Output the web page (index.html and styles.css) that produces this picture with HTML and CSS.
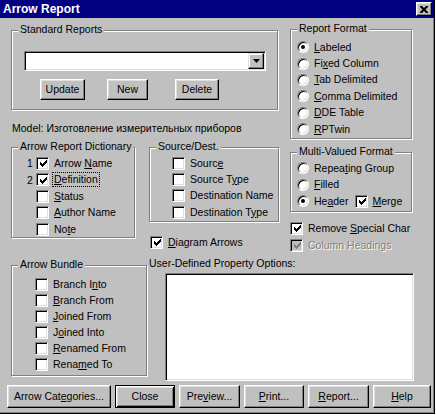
FILE: index.html
```html
<!DOCTYPE html>
<html>
<head>
<meta charset="utf-8">
<title>Arrow Report</title>
<link rel="stylesheet" href="styles.css">
</head>
<body>
<div class="window">
  <div class="titlebar">
    <span class="title">Arrow Report</span>
    <span class="close"><svg width="8" height="7" viewBox="0 0 8 7"><path d="M0 0h2l2 2 2-2h2v1l-2.5 2.5 2.5 2.5v1h-2l-2-2-2 2h-2v-1l2.5-2.5-2.5-2.5z"/></svg></span>
  </div>
  <div class="client">
    <div class="upper">
      <div class="leftcol">
        <div class="group std">
          <div class="legend">Standard Reports</div>
          <div class="combo">
            <div class="combo-btn"><svg width="7" height="4" viewBox="0 0 7 4"><path d="M0 0h7l-3.5 4z"/></svg></div>
          </div>
          <div class="btnrow">
            <button class="btn b-update">Update</button>
            <button class="btn b-new">New</button>
            <button class="btn b-delete">Delete</button>
          </div>
        </div>
        <div class="model">Model: Изготовление измерительных приборов</div>
        <div class="dictrow">
          <div class="group dict">
            <div class="legend">Arrow Report Dictionary</div>
            <div class="list dict-list">
              <div class="row"><span class="num">1</span><span class="cb on"><svg width="7" height="7" viewBox="0 0 7 7"><path d="M0 2h1v3h-1zM1 3h1v3h-1zM2 4h1v3h-1zM3 3h1v3h-1zM4 2h1v3h-1zM5 1h1v3h-1zM6 0h1v3h-1z"/></svg></span><span class="lbl">Arrow <u>N</u>ame</span></div>
              <div class="row"><span class="num">2</span><span class="cb on"><svg width="7" height="7" viewBox="0 0 7 7"><path d="M0 2h1v3h-1zM1 3h1v3h-1zM2 4h1v3h-1zM3 3h1v3h-1zM4 2h1v3h-1zM5 1h1v3h-1zM6 0h1v3h-1z"/></svg></span><span class="lbl focus"><u>D</u>efinition</span></div>
              <div class="row"><span class="num"></span><span class="cb"></span><span class="lbl"><u>S</u>tatus</span></div>
              <div class="row"><span class="num"></span><span class="cb"></span><span class="lbl"><u>A</u>uthor Name</span></div>
              <div class="row"><span class="num"></span><span class="cb"></span><span class="lbl">No<u>t</u>e</span></div>
            </div>
          </div>
          <div class="srccol">
            <div class="group src">
              <div class="legend">Source/Dest.</div>
              <div class="list src-list">
                <div class="row"><span class="cb"></span><span class="lbl">Sourc<u>e</u></span></div>
                <div class="row"><span class="cb"></span><span class="lbl">Source T<u>y</u>pe</span></div>
                <div class="row"><span class="cb"></span><span class="lbl">Destination Name</span></div>
                <div class="row"><span class="cb"></span><span class="lbl">Destination T<u>y</u>pe</span></div>
              </div>
            </div>
            <div class="row diagram"><span class="cb on"><svg width="7" height="7" viewBox="0 0 7 7"><path d="M0 2h1v3h-1zM1 3h1v3h-1zM2 4h1v3h-1zM3 3h1v3h-1zM4 2h1v3h-1zM5 1h1v3h-1zM6 0h1v3h-1z"/></svg></span><span class="lbl"><u>D</u>iagram Arrows</span></div>
          </div>
        </div>
      </div>
      <div class="rightcol">
        <div class="group fmt">
          <div class="legend">Report Format</div>
          <div class="list fmt-list">
            <div class="row"><span class="radio on"></span><span class="lbl"><u>L</u>abeled</span></div>
            <div class="row"><span class="radio"></span><span class="lbl">Fi<u>x</u>ed Column</span></div>
            <div class="row"><span class="radio"></span><span class="lbl"><u>T</u>ab Delimited</span></div>
            <div class="row"><span class="radio"></span><span class="lbl"><u>C</u>omma Delimited</span></div>
            <div class="row"><span class="radio"></span><span class="lbl"><u>D</u>DE Table</span></div>
            <div class="row"><span class="radio"></span><span class="lbl"><u>R</u>PTwin</span></div>
          </div>
        </div>
        <div class="group multi">
          <div class="legend">Multi-Valued Format</div>
          <div class="list multi-list">
            <div class="row"><span class="radio"></span><span class="lbl">Repea<u>t</u>ing Group</span></div>
            <div class="row"><span class="radio"></span><span class="lbl"><u>F</u>illed</span></div>
            <div class="row"><span class="radio on"></span><span class="lbl">He<u>a</u>der</span><span class="cb on merge"><svg width="7" height="7" viewBox="0 0 7 7"><path d="M0 2h1v3h-1zM1 3h1v3h-1zM2 4h1v3h-1zM3 3h1v3h-1zM4 2h1v3h-1zM5 1h1v3h-1zM6 0h1v3h-1z"/></svg></span><span class="lbl"><u>M</u>erge</span></div>
          </div>
        </div>
        <div class="row remove"><span class="cb on"><svg width="7" height="7" viewBox="0 0 7 7"><path d="M0 2h1v3h-1zM1 3h1v3h-1zM2 4h1v3h-1zM3 3h1v3h-1zM4 2h1v3h-1zM5 1h1v3h-1zM6 0h1v3h-1z"/></svg></span><span class="lbl wide">Remove <u>S</u>pecial Char</span></div>
        <div class="row colhead disabled"><span class="cb on"><svg width="7" height="7" viewBox="0 0 7 7"><path d="M0 2h1v3h-1zM1 3h1v3h-1zM2 4h1v3h-1zM3 3h1v3h-1zM4 2h1v3h-1zM5 1h1v3h-1zM6 0h1v3h-1z"/></svg></span><span class="lbl wide">Column Headings</span></div>
      </div>
    </div>
    <div class="lower">
      <div class="group bundle">
        <div class="legend">Arrow Bundle</div>
        <div class="list bundle-list">
          <div class="row"><span class="cb"></span><span class="lbl">Branch I<u>n</u>to</span></div>
          <div class="row"><span class="cb"></span><span class="lbl"><u>B</u>ranch From</span></div>
          <div class="row"><span class="cb"></span><span class="lbl"><u>J</u>oined From</span></div>
          <div class="row"><span class="cb"></span><span class="lbl">J<u>o</u>ined Into</span></div>
          <div class="row"><span class="cb"></span><span class="lbl"><u>R</u>enamed From</span></div>
          <div class="row"><span class="cb"></span><span class="lbl">Rena<u>m</u>ed To</span></div>
        </div>
      </div>
      <div class="udcol">
        <div class="udlabel">User-Defined Property Options:</div>
        <div class="listbox"></div>
      </div>
    </div>
    <div class="buttons">
      <button class="btn w-cat">Arrow Cat<u>e</u>gories...</button>
      <button class="btn default w-close">Close</button>
      <button class="btn w-prev">Pre<u>v</u>iew...</button>
      <button class="btn w-print"><u>P</u>rint...</button>
      <button class="btn w-report"><u>R</u>eport...</button>
      <button class="btn w-help"><u>H</u>elp</button>
    </div>
  </div>
</div>
</body>
</html>
```

FILE: styles.css
```css
html, body {
  margin: 0;
  padding: 0;
  background: #ffffff;
}
body {
  font-family: "Liberation Sans", Arial, sans-serif;
  font-size: 10.5px;
  color: #000;
}
u { text-decoration: underline; text-underline-offset: 1px; }

.window {
  width: 434px;
  height: 413px;
  background: #c0c0c0;
  border-right: 1px solid #000;
  border-bottom: 1px solid #000;
  box-shadow: inset -1px -1px 0 #808080;
  display: flex;
  flex-direction: column;
}

.titlebar {
  height: 18px;
  background: #000080;
  display: flex;
  align-items: center;
  padding: 0 2px 0 3px;
  flex: none;
}
.title {
  color: #fff;
  font-weight: bold;
  font-size: 12px;
  line-height: 18px;
}
.close {
  margin-left: auto;
  width: 16px;
  height: 14px;
  box-sizing: border-box;
  background: #c0c0c0;
  border: 1px solid;
  border-color: #fff #000 #000 #fff;
  box-shadow: inset -1px -1px 0 #808080, inset 1px 1px 0 #dfdfdf;
  display: flex;
  align-items: center;
  justify-content: center;
}

.client {
  display: flex;
  flex-direction: column;
}

.upper {
  height: 237px;
  display: flex;
}
.leftcol {
  margin: 12px 0 0 11px;
  width: 268px;
  display: flex;
  flex-direction: column;
}
.rightcol {
  margin: 11px 0 0 11px;
  width: 122px;
  display: flex;
  flex-direction: column;
}

.group {
  box-sizing: border-box;
  border: 1px solid #808080;
  box-shadow: inset 1px 1px 0 #fff, 1px 1px 0 #fff;
  flex: none;
}
.legend {
  width: max-content;
  height: 13px;
  line-height: 13px;
  background: #c0c0c0;
  padding: 0 2px;
  margin: -8px 0 -5px 6px;
  position: relative;
}

.std { width: 267px; height: 80px; }
.combo {
  margin: 20px 0 0 12px;
  width: 242px;
  height: 20px;
  box-sizing: border-box;
  background: #fff;
  border: 1px solid;
  border-color: #808080 #fff #fff #808080;
  box-shadow: inset 1px 1px 0 #000, inset -1px -1px 0 #dfdfdf;
  display: flex;
  justify-content: flex-end;
  padding: 1px;
}
.combo-btn {
  width: 16px;
  height: 16px;
  box-sizing: border-box;
  background: #c0c0c0;
  border: 1px solid;
  border-color: #dfdfdf #000 #000 #dfdfdf;
  box-shadow: inset -1px -1px 0 #808080, inset 1px 1px 0 #fff;
  display: flex;
  align-items: center;
  justify-content: center;
}

.btnrow {
  display: flex;
  margin-top: 8px;
}
.btn {
  font-family: inherit;
  font-size: 10.5px;
  color: #000;
  background: #c0c0c0;
  box-sizing: border-box;
  border: 1px solid;
  border-color: #fff #000 #000 #fff;
  box-shadow: inset -1px -1px 0 #808080, inset 1px 1px 0 #dfdfdf;
  padding: 0;
  margin: 0;
  height: 21px;
  line-height: 17px;
  text-align: center;
  flex: none;
}
.btn.default {
  border: 1px solid #000;
  box-shadow: inset 1px 1px 0 #fff, inset -1px -1px 0 #000, inset 2px 2px 0 #dfdfdf, inset -2px -2px 0 #808080;
}
.b-update { margin-left: 28px; width: 45px; }
.b-new { margin-left: 22px; width: 41px; }
.b-delete { margin-left: 27px; width: 44px; }

.model {
  margin-top: 12px;
  line-height: 13px;
  height: 13px;
  margin-left: 1px;
  white-space: nowrap;
}

.dictrow {
  display: flex;
  margin-top: 12px;
  align-items: flex-start;
}
.dict { width: 124px; height: 91px; }
.srccol {
  margin-left: 14px;
  display: flex;
  flex-direction: column;
}
.src { width: 130px; height: 75px; }

.list { display: flex; flex-direction: column; }
.row {
  display: flex;
  align-items: center;
  white-space: nowrap;
}
.dict-list { padding: 7px 0 0 15px; }
.dict-list .row { height: 16.5px; }
.num { width: 9px; flex: none; }
.src-list { padding: 7px 0 0 22px; }
.src-list .row { height: 16.33px; }
.fmt { width: 122px; height: 110px; }
.fmt-list { padding: 9px 0 0 6px; }
.fmt-list .row { height: 16.4px; }
.multi { width: 122px; height: 60px; margin-top: 13px; }
.multi-list { padding: 7px 0 0 6px; }
.multi-list .row { height: 16.5px; }

.diagram { height: 16px; margin: 12px 0 0 1px; }
.remove { height: 16px; margin-top: 8px; }
.colhead { height: 16px; margin-top: 1px; }

.cb {
  width: 13px;
  height: 13px;
  box-sizing: border-box;
  flex: none;
  background: #fff;
  border: 1px solid;
  border-color: #808080 #fff #fff #808080;
  box-shadow: inset 1px 1px 0 #000, inset -1px -1px 0 #dfdfdf;
  display: flex;
  align-items: center;
  justify-content: center;
}
.cb svg { display: block; fill: #000; margin: 1px 0 0 1px; }
.lbl { margin-left: 5px; line-height: 13px; }
.cb.merge { margin-left: 7px; }
.merge + .lbl { margin-left: 4px; }
.lbl.focus {
  outline: 1px dotted #000;
  outline-offset: 0;
  margin-left: 4px;
  padding: 0 1px;
}

.disabled .cb { background: #c0c0c0; }
.disabled .cb svg { fill: #808080; }
.disabled .lbl { color: #808080; text-shadow: 1px 1px 0 #fff; }

.radio {
  width: 12px;
  height: 12px;
  box-sizing: border-box;
  flex: none;
  border-radius: 50%;
  background: #fff;
  border: 1px solid;
  border-color: #808080 #fff #fff #808080;
  box-shadow: inset 1px 1px 0 #000, inset -1px -1px 0 #dfdfdf;
  display: flex;
  align-items: center;
  justify-content: center;
}
.radio.on::after {
  content: "";
  width: 4px;
  height: 4px;
  border-radius: 50%;
  background: #000;
}

.lower {
  height: 126px;
  display: flex;
  align-items: flex-start;
}
.bundle {
  margin: 10px 0 0 11px;
  width: 136px;
  height: 111px;
}
.bundle-list { padding: 10px 0 0 23px; }
.bundle-list .row { height: 16px; }
.udcol {
  margin-left: 2px;
  display: flex;
  flex-direction: column;
}
.udlabel {
  margin-top: 2px;
  line-height: 13px;
  height: 13px;
  white-space: nowrap;
}
.listbox {
  margin: 3px 0 0 16px;
  width: 249px;
  height: 108px;
  box-sizing: border-box;
  background: #fff;
  border: 1px solid;
  border-color: #808080 #fff #fff #808080;
  box-shadow: inset 1px 1px 0 #000, inset -1px -1px 0 #dfdfdf;
}

.buttons {
  display: flex;
  gap: 4px;
  margin-top: 4px;
  padding-left: 7px;
}
.buttons .btn { height: 23px; line-height: 19px; }
.w-cat { width: 104px; }
.w-close { width: 60px; }
.w-prev { width: 61px; }
.w-print { width: 60px; }
.w-report { width: 61px; }
.w-help { width: 58px; }
```
